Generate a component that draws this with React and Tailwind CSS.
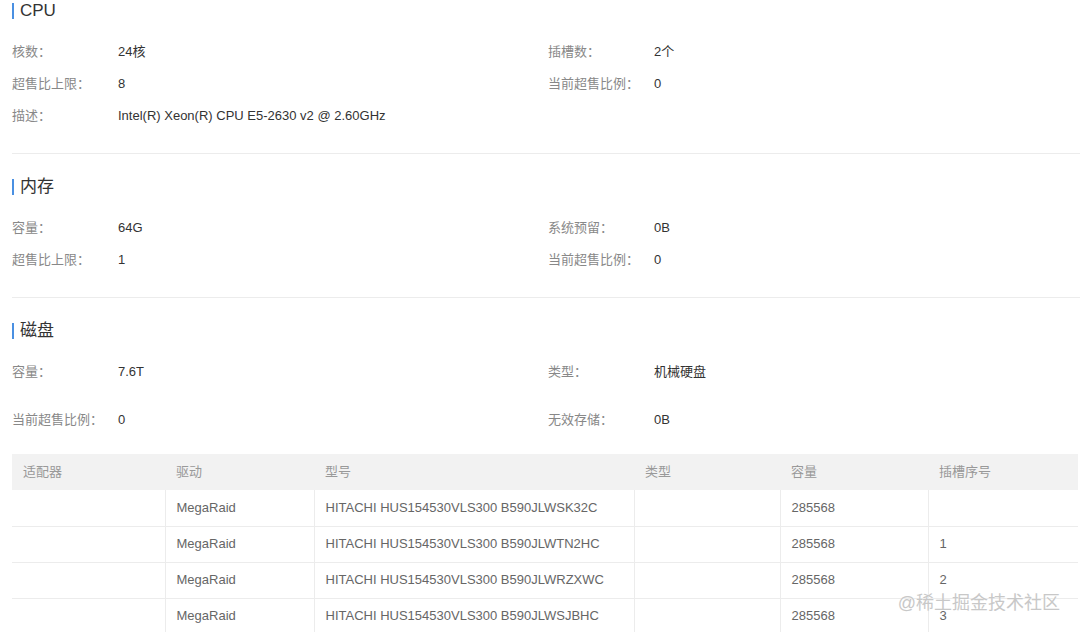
import React from "react";

const font = { fontFamily: '"Liberation Sans", Arial, "Noto Sans CJK SC", sans-serif' };

function SectionTitle({ children }) {
  return (
    <div className="flex items-center h-[22px]">
      <span className="w-[2px] h-[16px] bg-[#4a90e2] mr-[6px]" />
      <span className="text-[17px] text-[#333]">{children}</span>
    </div>
  );
}

function Field({ label, value }) {
  return (
    <div className="flex items-center h-[32px] text-[13px]">
      <span className="w-[106px] text-[#888]">{label}</span>
      <span className="text-[#333]">{value}</span>
    </div>
  );
}

function Divider() {
  return <div className="h-px bg-[#ececec] mr-[-12px]" />;
}

const disks = [
  { driver: "MegaRaid", model: "HITACHI HUS154530VLS300 B590JLWSK32C", size: "285568", slot: "" },
  { driver: "MegaRaid", model: "HITACHI HUS154530VLS300 B590JLWTN2HC", size: "285568", slot: "1" },
  { driver: "MegaRaid", model: "HITACHI HUS154530VLS300 B590JLWRZXWC", size: "285568", slot: "2" },
  { driver: "MegaRaid", model: "HITACHI HUS154530VLS300 B590JLWSJBHC", size: "285568", slot: "3" },
];

export default function App() {
  return (
    <div className="relative w-[1080px] h-[632px] overflow-hidden bg-white pl-[12px] pr-[2px]" style={font}>
      {/* CPU */}
      <SectionTitle>CPU</SectionTitle>
      <div className="grid grid-cols-[536px_1fr] mt-[14px]">
        <Field label="核数：" value="24核" />
        <Field label="插槽数：" value="2个" />
        <Field label="超售比上限：" value="8" />
        <Field label="当前超售比例：" value="0" />
        <Field label="描述：" value="Intel(R) Xeon(R) CPU E5-2630 v2 @ 2.60GHz" />
      </div>
      <div className="mt-[21px]">
        <Divider />
      </div>

      {/* 内存 */}
      <div className="mt-[22px]">
        <SectionTitle>内存</SectionTitle>
      </div>
      <div className="grid grid-cols-[536px_1fr] mt-[14px]">
        <Field label="容量：" value="64G" />
        <Field label="系统预留：" value="0B" />
        <Field label="超售比上限：" value="1" />
        <Field label="当前超售比例：" value="0" />
      </div>
      <div className="mt-[21px]">
        <Divider />
      </div>

      {/* 磁盘 */}
      <div className="mt-[22px]">
        <SectionTitle>磁盘</SectionTitle>
      </div>
      <div className="grid grid-cols-[536px_1fr] mt-[14px]">
        <Field label="容量：" value="7.6T" />
        <Field label="类型：" value="机械硬盘" />
      </div>
      <div className="grid grid-cols-[536px_1fr] mt-[16px]">
        <Field label="当前超售比例：" value="0" />
        <Field label="无效存储：" value="0B" />
      </div>

      <table className="mt-[18px] w-[1066px] border-collapse text-[13px] table-fixed">
        <colgroup>
          <col className="w-[153px]" />
          <col className="w-[149px]" />
          <col className="w-[320px]" />
          <col className="w-[146px]" />
          <col className="w-[148px]" />
          <col className="w-[150px]" />
        </colgroup>
        <thead>
          <tr className="bg-[#f2f2f2] h-[36px] text-[#999] text-left">
            <th className="font-normal px-[11px]">适配器</th>
            <th className="font-normal px-[11px]">驱动</th>
            <th className="font-normal px-[11px]">型号</th>
            <th className="font-normal px-[11px]">类型</th>
            <th className="font-normal px-[11px]">容量</th>
            <th className="font-normal px-[11px]">插槽序号</th>
          </tr>
        </thead>
        <tbody className="text-[#666]">
          {disks.map((d, i) => (
            <tr key={i} className="h-[36px] border-b border-[#ececec]">
              <td className="px-[11px]"></td>
              <td className="px-[11px] border-l border-[#ececec]">{d.driver}</td>
              <td className="px-[11px] border-l border-[#ececec]">{d.model}</td>
              <td className="px-[11px] border-l border-[#ececec]"></td>
              <td className="px-[11px] border-l border-[#ececec]">{d.size}</td>
              <td className="px-[11px] border-l border-[#ececec]">{d.slot}</td>
            </tr>
          ))}
        </tbody>
      </table>

      <div
        className="absolute right-[20px] top-[590px] text-[18px] text-[#c8c8c8]"
        style={{ textShadow: "0 0 1px #fff" }}
      >
        @稀土掘金技术社区
      </div>
    </div>
  );
}
